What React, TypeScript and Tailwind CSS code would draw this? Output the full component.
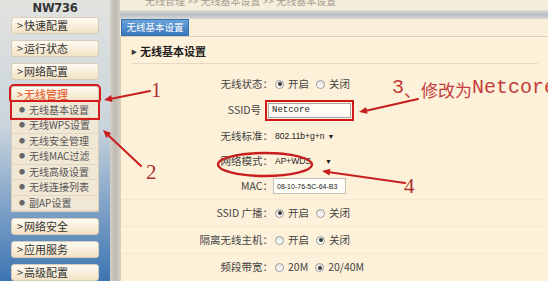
import React from "react";

const cjk = "font-['Noto_Sans_CJK_SC',sans-serif]";

function MenuBox({ label }: { label: string }) {
  return (
    <div className="mx-[11px] h-[17px] rounded-[3px] border border-[#d6ccb8] bg-gradient-to-b from-[#fffbf2] to-[#f2e2c4] flex items-center pl-[5px] text-[11px] leading-none text-[#333]">
      <span className="mr-[1px]">&gt;</span>
      {label}
    </div>
  );
}

function SubItem({ label, first }: { label: string; first?: boolean }) {
  return (
    <div
      className={`flex items-center pl-[7px] text-[10px] leading-none text-[#555] border-b border-[#e3d7c2] ${
        first ? "h-[16px] outline-2 outline-[#d41c1c] relative z-10" : "h-[15.5px]"
      }`}
    >
      <span className="text-[6px] text-[#666] mr-[4px]">●</span>
      {label}
    </div>
  );
}

function Radio({ checked }: { checked?: boolean }) {
  return (
    <span className="w-[9px] h-[9px] rounded-full border border-[#9c9c9c] bg-gradient-to-b from-[#e4e4e4] to-[#ffffff] flex items-center justify-center shrink-0">
      {checked && <span className="w-[4px] h-[4px] rounded-full bg-[#3a3a3a]" />}
    </span>
  );
}

function Row({
  label,
  h,
  children,
  line,
  labelPad,
}: {
  label: string;
  h: string;
  children: React.ReactNode;
  line?: boolean;
  labelPad?: string;
}) {
  return (
    <div className={`flex items-center ${h} ${line ? "border-b border-dotted border-[#eedfc4]" : ""}`}>
      <div className={`w-[152px] text-right text-[10.5px] text-[#444] leading-none shrink-0 ${labelPad ?? ""}`}>
        {label}
      </div>
      <div className="flex items-center text-[10.5px] text-[#444] leading-none">{children}</div>
    </div>
  );
}

function RadioPair({ a, b, first }: { a: string; b: string; first: boolean }) {
  return (
    <>
      <span className="ml-[2px]">
        <Radio checked={first} />
      </span>
      <span className="ml-[4px]">{a}</span>
      <span className="ml-[7px]">
        <Radio checked={!first} />
      </span>
      <span className="ml-[4px]">{b}</span>
    </>
  );
}

export default function App() {
  return (
    <div className={`relative w-[548px] h-[281px] overflow-hidden flex ${cjk}`}>
      {/* Sidebar */}
      <div className="w-[110px] h-full bg-gradient-to-b from-[#e2e3df] via-[#c9d4dc] via-45% to-[#3b74b2] flex flex-col">
        <div className="h-[27px] pt-[2px] text-center text-[11.5px] font-bold text-[#333] font-['DejaVu_Sans',sans-serif] leading-[12px] tracking-tight">
          NW736
        </div>
        <div className="flex flex-col gap-[6px]">
          <MenuBox label="快速配置" />
          <MenuBox label="运行状态" />
          <MenuBox label="网络配置" />
          <div className="flex flex-col">
            <div className="mx-[11px] h-[16px] rounded-[3px] border border-[#d6ccb8] bg-gradient-to-b from-[#fffbf2] to-[#f2e2c4] flex items-center pl-[5px] text-[11px] leading-none text-[#e4501e] outline-2 outline-[#d41c1c]">
              <span className="mr-[1px]">&gt;</span>无线管理
            </div>
            <div className="mx-[11px] bg-[#f1e7d5] border-x border-b border-[#d9cdb8]">
              <SubItem label="无线基本设置" first />
              <SubItem label="无线WPS设置" />
              <SubItem label="无线安全管理" />
              <SubItem label="无线MAC过滤" />
              <SubItem label="无线高级设置" />
              <SubItem label="无线连接列表" />
              <SubItem label="副AP设置" />
            </div>
          </div>
          <MenuBox label="网络安全" />
          <MenuBox label="应用服务" />
          <MenuBox label="高级配置" />
        </div>
      </div>
      <div className="w-[10px] h-full bg-gradient-to-r from-[#d4d0c8] via-[#bfbbb3] to-[#d2cec6]" />

      {/* Main */}
      <div className="flex-1 h-full flex flex-col bg-[#fdf1d9]">
        <div className="h-[12px] bg-[#f6eedd] overflow-hidden">
          <div className="mt-[-5px] ml-[25px] text-[10px] text-[#a39c90] leading-[12px] whitespace-nowrap">
            无线管理 &gt;&gt; 无线基本设置 &gt;&gt; 无线基本设置
          </div>
        </div>
        <div className="h-[10px] bg-gradient-to-b from-[#e2dfd8] via-[#b8bfc5] to-[#dbd9d3]" />
        <div className="h-[17px] bg-[#f9eed8] flex pl-[1px]">
          <div className="w-[68px] h-[17px] bg-gradient-to-b from-[#6aa2d8] to-[#3a78bd] border border-[#3470b0] text-white text-[9.5px] flex items-center justify-center leading-none">
            无线基本设置
          </div>
        </div>
        <div className="flex-1 border-l border-t border-[#ddd0b8] bg-[#fdf1d9] flex flex-col">
          <div className="h-[27px] mx-[10px] border-b border-[#e8dac0] flex items-center pt-[2px]">
            <span className="text-[6px] text-[#333] mr-[3px]">▶</span>
            <span className="text-[11px] font-bold text-[#222] leading-none">无线基本设置</span>
          </div>
          <div className="h-[7px]" />
          <Row label="无线状态：" h="h-[26px]">
            <RadioPair a="开启" b="关闭" first />
          </Row>
          <Row label="SSID号" h="h-[26px]" labelPad="pr-[12px]">
            <div className="ml-[-5px] w-[83px] h-[15px] border border-[#a8a8a8] bg-[#fffdf6] outline-2 outline-offset-1 outline-[#d01818] flex items-center pl-[3px] text-[9px] font-['Liberation_Mono',monospace] text-[#222]">
              Netcore
            </div>
          </Row>
          <Row label="无线标准：" h="h-[27px]">
            <div className="ml-[2px] flex items-center text-[8.5px] font-['Liberation_Sans',sans-serif] text-[#222]">
              802.11b+g+n
              <span className="ml-[3px] text-[7px]">▼</span>
            </div>
          </Row>
          <Row label="网络模式：" h="h-[23px]">
            <div className="ml-[2px] flex items-center text-[8.5px] font-['Liberation_Sans',sans-serif] text-[#222]">
              <span className="w-[50px]">AP+WDS</span>
              <span className="text-[7px]">▼</span>
            </div>
          </Row>
          <Row label="MAC：" h="h-[27px]" line>
            <div className="w-[73px] h-[16px] border border-[#c4c0b8] bg-[#fffef9] flex items-center pl-[3px] text-[7px] font-['Liberation_Sans',sans-serif] text-[#222] whitespace-nowrap">
              08-10-76-5C-64-B3
            </div>
          </Row>
          <Row label="SSID 广播：" h="h-[27px]" line>
            <RadioPair a="开启" b="关闭" first />
          </Row>
          <Row label="隔离无线主机：" h="h-[27px]" line>
            <RadioPair a="开启" b="关闭" first={false} />
          </Row>
          <Row label="频段带宽：" h="h-[27px]">
            <RadioPair a="20M" b="20/40M" first={false} />
          </Row>
        </div>
      </div>

      {/* Annotations overlay */}
      <svg className="absolute left-0 top-0 pointer-events-none" width="548" height="281" viewBox="0 0 548 281">
        <g stroke="#c81e1e" strokeWidth="2" fill="none" strokeLinecap="round">
          <line x1="150" y1="91" x2="110" y2="99" />
          <line x1="141" y1="166" x2="107" y2="134" />
          <line x1="418" y1="99" x2="365" y2="111" />
          <line x1="405" y1="183" x2="328" y2="172" />
          <ellipse cx="265" cy="164.5" rx="47" ry="11.5" strokeWidth="2.4" />
        </g>
        <g fill="#c81e1e">
          <polygon points="104,100 111.2,95 112.5,101.9" />
          <polygon points="103,130 111.2,133 106.4,138" />
          <polygon points="359,112 366.1,106.9 367.6,113.7" />
          <polygon points="322,171 330.4,168.7 329.4,175.6" />
        </g>
      </svg>
      <div className="absolute left-[151px] top-[80px] text-[21px] leading-none text-[#b03030] font-['Liberation_Serif',serif]">
        1
      </div>
      <div className="absolute left-[146px] top-[162px] text-[21px] leading-none text-[#b03030] font-['Liberation_Serif',serif]">
        2
      </div>
      <div className="absolute left-[404px] top-[176px] text-[21px] leading-none text-[#b03030] font-['Liberation_Serif',serif]">
        4
      </div>
      <div className="absolute left-[392px] top-[78px] flex items-end leading-none text-[#c43c3c] whitespace-nowrap">
        <span className="text-[20px] font-['Liberation_Mono',monospace]">3</span>
        <span className="text-[17px] font-['Noto_Sans_CJK_SC',sans-serif]">、修改为</span>
        <span className="text-[20px] font-['Liberation_Mono',monospace]">Netcore</span>
      </div>
    </div>
  );
}
